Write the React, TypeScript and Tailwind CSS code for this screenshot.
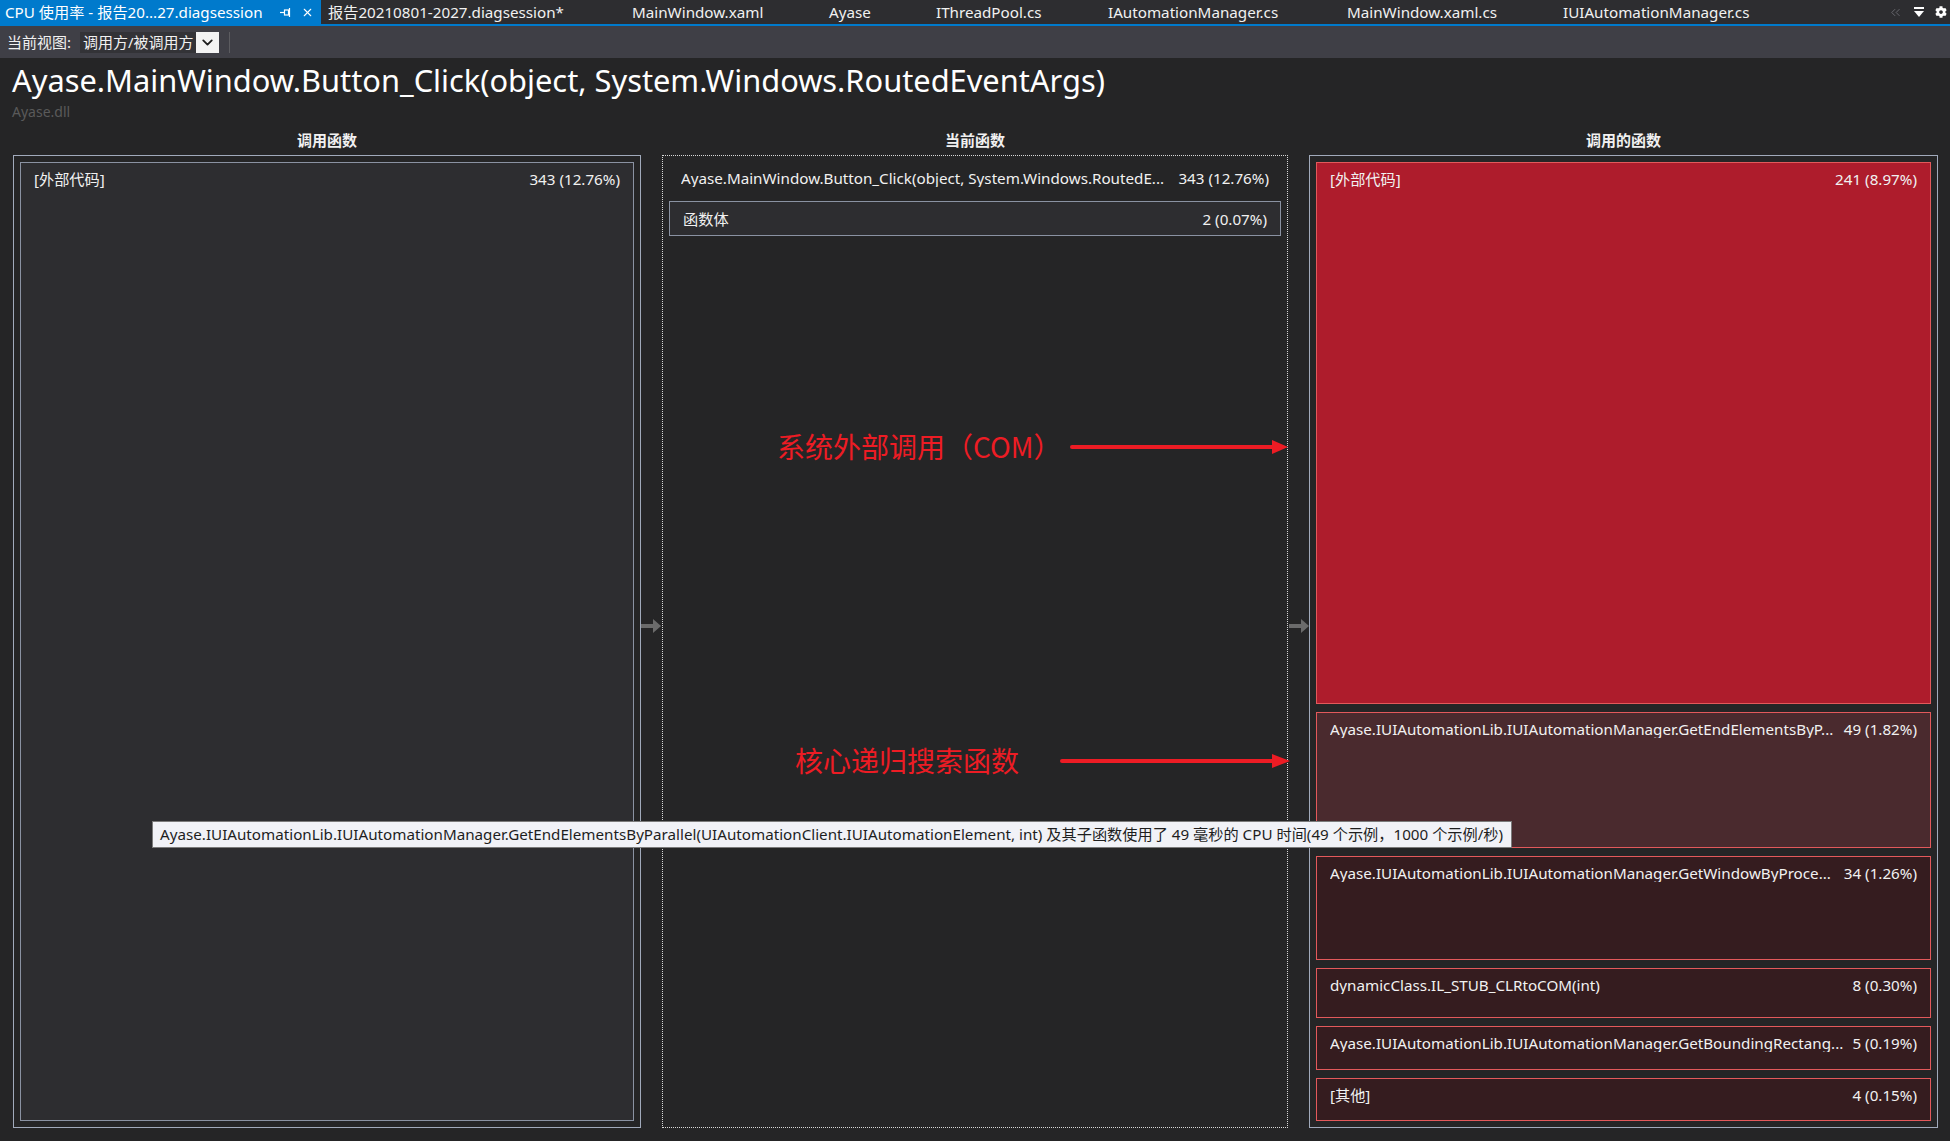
import { X, ChevronDown, ChevronsLeft } from 'lucide-react';
import { FaCog } from 'react-icons/fa';

const ui = "font-[family-name:'Noto_Sans','Noto_Sans_CJK_SC',sans-serif]";

const tabs = [
  { label: '报告20210801-2027.diagsession*', cls: 'w-[304px]' },
  { label: 'MainWindow.xaml', cls: 'w-[197px]' },
  { label: 'Ayase', cls: 'w-[107px]' },
  { label: 'IThreadPool.cs', cls: 'w-[172px]' },
  { label: 'IAutomationManager.cs', cls: 'w-[239px]' },
  { label: 'MainWindow.xaml.cs', cls: 'w-[216px]' },
  { label: 'IUIAutomationManager.cs', cls: 'w-[220px]' },
];

const callees = [
  { name: '[外部代码]', value: '241 (8.97%)', cls: 'h-[542px] bg-[#ae1c2c]' },
  { name: 'Ayase.IUIAutomationLib.IUIAutomationManager.GetEndElementsByP...', value: '49 (1.82%)', cls: 'h-[136px] bg-[#4a2a2e]' },
  { name: 'Ayase.IUIAutomationLib.IUIAutomationManager.GetWindowByProce...', value: '34 (1.26%)', cls: 'h-[104px] bg-[#351c1f]' },
  { name: 'dynamicClass.IL_STUB_CLRtoCOM(int)', value: '8 (0.30%)', cls: 'h-[50px] bg-[#351c1f]' },
  { name: 'Ayase.IUIAutomationLib.IUIAutomationManager.GetBoundingRectang...', value: '5 (0.19%)', cls: 'h-[44px] bg-[#351c1f]' },
  { name: '[其他]', value: '4 (0.15%)', cls: 'flex-1 bg-[#351c1f]' },
];

function FlowArrow() {
  return (
    <svg width="21" height="16" viewBox="0 0 21 16">
      <rect x="0" y="6" width="13" height="4" fill="#6b6b6b" />
      <polygon points="12,1 20,8 12,15" fill="#6b6b6b" />
    </svg>
  );
}

function Row({ name, value }: { name: string; value: string }) {
  return (
    <div className="flex items-center leading-[18px] text-[15.2px] text-[#f1f1f1] whitespace-nowrap">
      <span className="flex-1 min-w-0 overflow-hidden">{name}</span>
      <span className="shrink-0 ml-[4px]">{value}</span>
    </div>
  );
}

export default function App() {
  return (
    <div className={`relative w-[1950px] h-[1141px] overflow-hidden bg-[#252526] text-[#f1f1f1] ${ui}`}>
      {/* document tabs */}
      <div className="flex h-[26px] bg-[#2d2d30] border-b-2 border-[#007acc] text-[15.2px] leading-[24px]">
        <div className="relative w-[321px] shrink-0 bg-[#007acc] pl-[5px] text-white whitespace-nowrap">
          CPU 使用率 - 报告20...27.diagsession
          <svg className="absolute left-[280px] top-[8px]" width="11" height="9" viewBox="0 0 11 9">
            <line x1="0" y1="4.5" x2="4" y2="4.5" stroke="#fff" strokeWidth="1.2" />
            <rect x="4.5" y="2" width="4" height="5" fill="none" stroke="#fff" strokeWidth="1.2" />
            <line x1="9.5" y1="0" x2="9.5" y2="9" stroke="#fff" strokeWidth="1.2" />
          </svg>
          <X size={13} strokeWidth={2} className="absolute left-[301px] top-[6px] text-white" />
        </div>
        {tabs.map((t) => (
          <div key={t.label} className={`${t.cls} shrink-0 pl-[7px] whitespace-nowrap text-[#f1f1f1]`}>
            {t.label}
          </div>
        ))}
        <div className="flex-1" />
        <div className="flex items-center gap-[11px] pr-[3px] text-white">
          <ChevronsLeft size={15} strokeWidth={1.5} className="text-[#6a6a70]" />
          <svg width="10" height="11" viewBox="0 0 10 11">
            <rect x="0" y="0" width="10" height="2" fill="#fff" />
            <polygon points="0,4 10,4 5,10" fill="#fff" />
          </svg>
          <FaCog size={12} />
        </div>
      </div>

      {/* toolbar */}
      <div className="flex items-center h-[32px] bg-[#3f3f46] pl-[7px] text-[15px]">
        <span className="w-[73px]">当前视图:</span>
        <div className="flex items-center h-[21px] bg-[#333337]">
          <span className="w-[116px] pl-[3px] leading-[21px]">调用方/被调用方</span>
          <div className="flex items-center justify-center w-[23px] h-[21px] bg-[#f3f3f3]">
            <ChevronDown size={17} strokeWidth={2.6} className="text-[#1e1e1e]" />
          </div>
        </div>
        <div className="ml-[10px] w-px h-[21px] bg-[#5c5c60]" />
      </div>

      {/* title */}
      <div className="pl-[12px]">
        <div className="mt-[2px] text-[30.8px] leading-[40px] text-white whitespace-nowrap">
          Ayase.MainWindow.Button_Click(object, System.Windows.RoutedEventArgs)
        </div>
        <div className="mt-[4px] text-[14px] leading-[16px] text-[#5a5a5a]">Ayase.dll</div>
      </div>

      {/* column headers */}
      <div className="mt-[10px] h-[20px] pl-[13px] grid grid-cols-[628px_21px_626px_21px_629px] text-[15px] font-bold leading-[20px] text-center">
        <div>调用函数</div>
        <div />
        <div>当前函数</div>
        <div />
        <div>调用的函数</div>
      </div>

      {/* panels */}
      <div className="mt-[5px] h-[973px] pl-[13px] grid grid-cols-[628px_21px_626px_21px_629px]">
        <div className="border border-[#a1aabb] p-[6px]">
          <div className="h-full border border-[#8a92a2] bg-[#2d2d30] px-[13px] pt-[7px]">
            <Row name="[外部代码]" value="343 (12.76%)" />
          </div>
        </div>

        <div className="pt-[463px]">
          <FlowArrow />
        </div>

        <div className="border border-dotted border-[#d8d8d8] bg-[#252526]">
          <div className="px-[18px] pt-[13px]">
            <Row name="Ayase.MainWindow.Button_Click(object, System.Windows.RoutedE..." value="343 (12.76%)" />
          </div>
          <div className="mx-[6px] mt-[14px] h-[35px] flex items-center border border-[#8a92a2] bg-[#2d2d30] px-[13px]">
            <div className="flex-1">
              <Row name="函数体" value="2 (0.07%)" />
            </div>
          </div>
        </div>

        <div className="pt-[463px] pl-[1px]">
          <FlowArrow />
        </div>

        <div className="flex flex-col gap-[8px] border border-[#a1aabb] p-[6px]">
          {callees.map((c) => (
            <div key={c.name} className={`${c.cls} shrink-0 border border-[#e3595b] px-[13px] pt-[7px]`}>
              <Row name={c.name} value={c.value} />
            </div>
          ))}
        </div>
      </div>

      {/* annotations */}
      <div className="absolute left-[777px] top-[428px] text-[28px] leading-[36px] text-[#ed1c24] whitespace-nowrap font-[family-name:'Noto_Sans_CJK_SC',sans-serif]">
        系统外部调用（COM）
      </div>
      <svg className="absolute left-[1070px] top-[437px]" width="220" height="20" viewBox="0 0 220 20">
        <line x1="2" y1="10" x2="206" y2="10" stroke="#ed1c24" strokeWidth="4" strokeLinecap="round" />
        <polygon points="202,3 218,10 202,17" fill="#ed1c24" />
      </svg>
      <div className="absolute left-[795px] top-[742px] text-[28px] leading-[36px] text-[#ed1c24] whitespace-nowrap font-[family-name:'Noto_Sans_CJK_SC',sans-serif]">
        核心递归搜索函数
      </div>
      <svg className="absolute left-[1060px] top-[751px]" width="232" height="20" viewBox="0 0 232 20">
        <line x1="2" y1="10" x2="216" y2="10" stroke="#ed1c24" strokeWidth="4" strokeLinecap="round" />
        <polygon points="212,3 230,10 212,17" fill="#ed1c24" />
      </svg>

      {/* tooltip */}
      <div className="absolute left-[152px] top-[821px] w-[1360px] h-[27px] border border-[#7b7b7b] bg-[#f1f2f7] pl-[7px] text-[15.2px] leading-[25px] text-[#1e1e1e] whitespace-nowrap overflow-hidden">
        Ayase.IUIAutomationLib.IUIAutomationManager.GetEndElementsByParallel(UIAutomationClient.IUIAutomationElement, int) 及其子函数使用了 49 毫秒的 CPU 时间(49 个示例，1000 个示例/秒)
      </div>
    </div>
  );
}
